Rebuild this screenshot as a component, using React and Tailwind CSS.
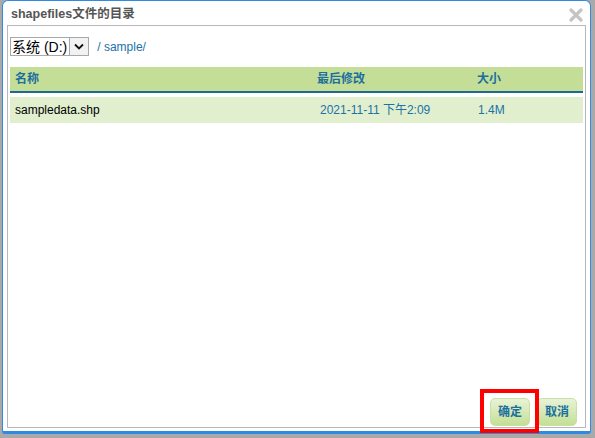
// File picker dialog: shapefiles directory listing
const cjk = { fontFamily: '"Liberation Sans", "Noto Sans CJK SC", sans-serif' };

const files = [
  { name: 'sampledata.shp', modified: '2021-11-11 下午2:09', size: '1.4M' },
];

function CloseIcon() {
  return (
    <svg width="16" height="16" viewBox="0 0 16 16" className="block">
      <path d="M3 3 L13 13 M13 3 L3 13" stroke="#c4c4c4" strokeWidth="3.2" strokeLinecap="round" />
    </svg>
  );
}

function DialogButton({ children }) {
  return (
    <button
      className="h-[28px] w-[40px] rounded-[5px] border border-[#c9dfa8] bg-gradient-to-b from-[#e8f3d6] to-[#c4df95] text-[12px] font-bold text-[#1a6f9e]"
      style={cjk}
    >
      {children}
    </button>
  );
}

export default function App() {
  return (
    <div className="w-[595px] h-[438px] bg-[#a9a9a9] overflow-hidden" style={cjk}>
      <div className="ml-[2px] w-[589px] h-[434px] bg-white border border-[#2f8ae6] border-b-[3px] rounded-t-[6px] rounded-b-[3px] flex flex-col">
        <div className="h-[24px] pt-[3px] flex items-center justify-between pl-[8px] pr-[6px]">
          <span className="text-[12.5px] font-bold text-[#555]">shapefiles文件的目录</span>
          <CloseIcon />
        </div>
        <div className="mx-[4px] mb-[3px] flex-1 border border-[#b8b8b8] relative flex flex-col">
          <div className="flex items-center gap-[8px] pl-[2px] pt-[11px]">
            <div className="flex items-center h-[19px] border border-[#a8a8a8] bg-white">
              <span className="pl-[1px] pr-[2px] text-[14px] text-black leading-none">系统 (D:)</span>
              <span className="h-[17px] w-[19px] border-l border-[#a8a8a8] bg-[#f2f2f2] flex items-center justify-center">
                <svg width="10" height="7" viewBox="0 0 10 7">
                  <path d="M1 1.5 L5 5.5 L9 1.5" stroke="#111" strokeWidth="1.8" fill="none" />
                </svg>
              </span>
            </div>
            <span className="text-[12px] text-[#1a72a8]">/ sample/</span>
          </div>
          <div className="mt-[11px] mx-[2px] h-[26px] bg-[#c5de97] border-b-2 border-[#1b6a94] flex items-center text-[12px] font-bold text-[#1a6f9e]">
            <span className="pl-[5px] w-[307px]">名称</span>
            <span className="w-[160px]">最后修改</span>
            <span>大小</span>
          </div>
          {files.map((f) => (
            <div key={f.name} className="mt-[4px] mx-[2px] h-[26px] bg-[#e1efce] flex items-center text-[12px]">
              <span className="pl-[5px] w-[310px] text-black">{f.name}</span>
              <span className="w-[158px] text-[#1a72a8]">{f.modified}</span>
              <span className="text-[#1a72a8]">{f.size}</span>
            </div>
          ))}
          <div className="mt-auto flex justify-end gap-[7px] pr-[8px] pb-[1px]">
            <div className="relative">
              <DialogButton>确定</DialogButton>
              <div className="absolute -left-[10px] -top-[9px] w-[59px] h-[44px] border-4 border-[#ff0000]" />
            </div>
            <DialogButton>取消</DialogButton>
          </div>
        </div>
      </div>
    </div>
  );
}
